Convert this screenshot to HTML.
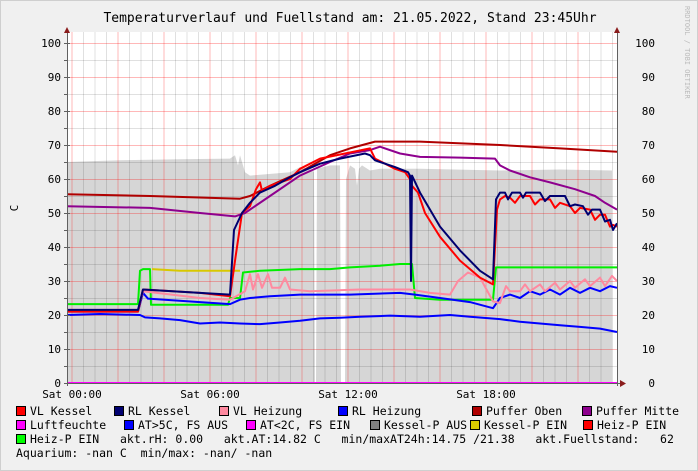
<!DOCTYPE html>
<html><head><meta charset="utf-8"><style>
html,body{margin:0;padding:0;background:#f0f0f0}
svg{display:block}
text{font-family:"DejaVu Sans Mono","Liberation Mono",monospace;fill:#000;white-space:pre}
.l{font-size:11.5px}
.a{font-size:11px}
</style></head><body>
<svg width="698" height="471" viewBox="0 0 698 471" xmlns="http://www.w3.org/2000/svg">
<rect x="0" y="0" width="698" height="471" fill="#f0f0f0"/>
<rect x="0.5" y="0.5" width="697" height="470" fill="none" stroke="#cfcfcf"/>
<text x="350" y="22" text-anchor="middle" style="font-size:13px">Temperaturverlauf und Fuellstand am: 21.05.2022, Stand 23:45Uhr</text>
<text transform="translate(685,6) rotate(90)" style="font-size:7px;fill:#bbb">RRDTOOL / TOBI OETIKER</text>
<text transform="translate(18,208) rotate(-90)" class="a" text-anchor="middle">C</text>
<rect x="67" y="32" width="550" height="351" fill="#fff"/>
<g transform="translate(0,383) scale(1,-3.4)">
<polygon fill="#d6d6d6" points="67,0 67,65 120,65.5 180,65.8 230,66 235,67 238,64 240,67 245,62 250,61 290,62 300,63.5 310,63 314,62 315,0 316,0 317,63 330,64 340,64 341,0 345,0 346,60 350,64 355,63 357,58 359,63 362,64 370,62.5 380,63 420,63 500,62.5 560,62.8 612,62.5 612,0"/>
</g>
<g stroke="#000" stroke-opacity="0.12" stroke-width="1">
<path d="M83.5 32V383M95 32V383M106.5 32V383M129.5 32V383M141 32V383M152.5 32V383M175.5 32V383M187 32V383M198.5 32V383M221.5 32V383M233 32V383M244.5 32V383M267.5 32V383M279 32V383M290.5 32V383M313.5 32V383M325 32V383M336.5 32V383M359.5 32V383M371 32V383M382.5 32V383M405.5 32V383M417 32V383M428.5 32V383M451.5 32V383M463 32V383M474.5 32V383M497.5 32V383M509 32V383M520.5 32V383M543.5 32V383M555 32V383M566.5 32V383M589.5 32V383M601 32V383M612.5 32V383"/>
<path d="M67 366.5H617M67 332.5H617M67 298.5H617M67 264.5H617M67 230.5H617M67 196.5H617M67 162.5H617M67 128.5H617M67 94.5H617M67 60.5H617"/>
</g>
<g stroke="#f00" stroke-opacity="0.28" stroke-width="1">
<path d="M72 32V383M118 32V383M164 32V383M210 32V383M256 32V383M302 32V383M348 32V383M394 32V383M440 32V383M486 32V383M532 32V383M578 32V383"/>
<path d="M67 349.5H617M67 315.5H617M67 281.5H617M67 247.5H617M67 213.5H617M67 179.5H617M67 145.5H617M67 111.5H617M67 77.5H617M67 43.5H617"/>
</g>
<g transform="translate(0,383) scale(1,-3.4)" fill="none" stroke-width="2" stroke-linejoin="round">
<polyline vector-effect="non-scaling-stroke" stroke="#0000ff" points="67,20 100,20.3 140,20 145,19.3 160,19 180,18.5 200,17.5 220,17.8 240,17.5 260,17.3 280,17.8 300,18.3 320,19 340,19.2 360,19.5 390,19.8 420,19.5 450,20 470,19.5 500,18.8 520,18 540,17.5 560,17 580,16.5 600,16 617,15"/>
<polyline vector-effect="non-scaling-stroke" stroke="#00ee00" points="67,23.2 138,23.2 140,33 143,33.5 150,33.5 151,23 228,23 230,25 240,25 243,32.5 260,33 300,33.5 330,33.5 350,34 380,34.5 400,35 412,35 415,25 440,24.5 493,24.5 496,34 540,34 617,34"/>
<polyline vector-effect="non-scaling-stroke" stroke="#d8c800" points="152,33.5 180,33 240,33"/>
<polyline vector-effect="non-scaling-stroke" stroke="#0000ff" points="67,21 138,21 143,26.5 148,24.8 200,23.8 230,23.2 240,24.5 250,25 270,25.5 300,26 350,26 400,26.5 415,26 440,25 470,23.8 493,22 500,25 510,26 520,25 530,27 540,26 550,27.5 560,26 570,28 580,26.5 590,28 600,27 610,28.5 617,28"/>
<polyline vector-effect="non-scaling-stroke" stroke="#ff8aa0" points="67,21.5 138,21.5 143,27 200,25 230,24.5 245,27 250,32 253,27.5 258,32 262,28 268,32 272,28 280,28 285,31 290,27.5 310,27 360,27.5 410,27.5 430,26.5 450,26 458,30 468,32.5 480,31 493,24 500,23.5 506,28.5 510,27 520,27 525,29 530,27 540,29 545,27 555,29.5 560,27.5 570,30 575,28 585,30.5 590,28.5 600,31 605,28.5 612,31.5 617,30"/>
<polyline vector-effect="non-scaling-stroke" stroke="#b00000" points="67,55.5 150,55 240,54.2 250,55 270,58 300,62 330,67 350,69 375,71 420,71 500,70 560,69 617,68"/>
<polyline vector-effect="non-scaling-stroke" stroke="#8e008e" points="67,52 150,51.5 200,50 235,49 245,50 270,55 300,61 330,65 350,67.5 370,68.5 380,69.5 400,67.5 420,66.5 460,66.3 495,66 500,64 510,62.5 530,60.5 550,59 575,57 595,55 605,53 617,51"/>
<polyline vector-effect="non-scaling-stroke" stroke="#ff0000" points="67,21 138,21 143,27.5 200,26.5 230,25.5 236,38 242,50 250,52 256,57 260,59 262,56.5 270,58 290,60 300,63 320,66 345,67.5 370,69 375,66 395,63 405,62 410,60 412,58 418,56 425,50 440,43 460,36 480,31 493,29 497,51 500,54 505,55 510,54.5 515,53 520,55 530,55 535,52.5 540,54 550,54 555,51.5 560,53 570,52 575,50 580,51.5 590,51 595,48 600,49.5 605,49.5 610,46 613,46.5 617,46"/>
<polyline vector-effect="non-scaling-stroke" stroke="#000070" points="67,21.5 138,21.5 143,27.5 200,26.5 230,26 234,45 242,50 250,53 260,56 275,58 290,60.5 300,62 320,64.5 340,66 365,67.5 370,67 375,65.5 395,63.5 408,62 410,61 411,30 412,61 420,56 440,46 460,39 480,33 493,30.5 496,54 500,56 505,56 508,54 512,56 520,56 523,54.5 526,56 540,56 545,53.5 550,55 565,55 570,52 575,52.5 583,52 588,49.5 592,51 600,51 605,47.5 610,48 613,45 617,47"/>
<polyline vector-effect="non-scaling-stroke" stroke="#ff00ff" points="67,0 617,0"/>
</g>
<g stroke="#606060" stroke-width="1" fill="none">
<path d="M67.5 32V386M617.5 32V386M64 383.5H620"/>
<path d="M64 366.5H67M64 349.5H70M64 332.5H67M64 315.5H70M64 298.5H67M64 281.5H70M64 264.5H67M64 247.5H70M64 230.5H67M64 213.5H70M64 196.5H67M64 179.5H70M64 162.5H67M64 145.5H70M64 128.5H67M64 111.5H70M64 94.5H67M64 77.5H70M64 60.5H67M64 43.5H70"/>
</g>
<polygon points="64,33 70,33 67,27" fill="#8a1c1c"/>
<polygon points="614,33 620,33 617,27" fill="#8a1c1c"/>
<polygon points="620,380 620,387 626,383.5" fill="#8a1c1c"/>
<g class="a" text-anchor="end">
<text x="61" y="47">100</text><text x="61" y="81">90</text><text x="61" y="115">80</text><text x="61" y="149">70</text><text x="61" y="183">60</text><text x="61" y="217">50</text><text x="61" y="251">40</text><text x="61" y="285">30</text><text x="61" y="319">20</text><text x="61" y="353">10</text><text x="61" y="387">0</text>
</g>
<g class="a" text-anchor="end">
<text x="655" y="47">100</text><text x="655" y="81">90</text><text x="655" y="115">80</text><text x="655" y="149">70</text><text x="655" y="183">60</text><text x="655" y="217">50</text><text x="655" y="251">40</text><text x="655" y="285">30</text><text x="655" y="319">20</text><text x="655" y="353">10</text><text x="655" y="387">0</text>
</g>
<g class="a" text-anchor="middle">
<text x="72" y="398">Sat 00:00</text><text x="210" y="398">Sat 06:00</text><text x="348" y="398">Sat 12:00</text><text x="486" y="398">Sat 18:00</text>
</g>
<g stroke="#000" stroke-width="1">
<rect x="16.5" y="406.5" width="9" height="9" fill="#ff0000"/>
<rect x="114.5" y="406.5" width="9" height="9" fill="#000070"/>
<rect x="219.5" y="406.5" width="9" height="9" fill="#ff8aa0"/>
<rect x="338.5" y="406.5" width="9" height="9" fill="#0000ff"/>
<rect x="472.5" y="406.5" width="9" height="9" fill="#b00000"/>
<rect x="582.5" y="406.5" width="9" height="9" fill="#8e008e"/>
<rect x="16.5" y="420.5" width="9" height="9" fill="#ff00ff"/>
<rect x="124.5" y="420.5" width="9" height="9" fill="#0000ff"/>
<rect x="246.5" y="420.5" width="9" height="9" fill="#ff00ff"/>
<rect x="370.5" y="420.5" width="9" height="9" fill="#808080"/>
<rect x="470.5" y="420.5" width="9" height="9" fill="#d8c800"/>
<rect x="583.5" y="420.5" width="9" height="9" fill="#ff0000"/>
<rect x="16.5" y="434.5" width="9" height="9" fill="#00ff00"/>
</g>
<g class="l">
<text x="30" y="415">VL Kessel</text>
<text x="128" y="415">RL Kessel</text>
<text x="233" y="415">VL Heizung</text>
<text x="352" y="415">RL Heizung</text>
<text x="486" y="415">Puffer Oben</text>
<text x="596" y="415">Puffer Mitte</text>
<text x="30" y="429">Luftfeuchte</text>
<text x="138" y="429">AT&gt;5C, FS AUS</text>
<text x="260" y="429">AT&lt;2C, FS EIN</text>
<text x="384" y="429">Kessel-P AUS</text>
<text x="484" y="429">Kessel-P EIN</text>
<text x="597" y="429">Heiz-P EIN</text>
<text x="30" y="443">Heiz-P EIN   akt.rH: 0.00   akt.AT:14.82 C   min/maxAT24h:14.75 /21.38   akt.Fuellstand:   62</text>
<text x="16" y="457">Aquarium: -nan C  min/max: -nan/ -nan</text>
</g>
</svg>
</body></html>
